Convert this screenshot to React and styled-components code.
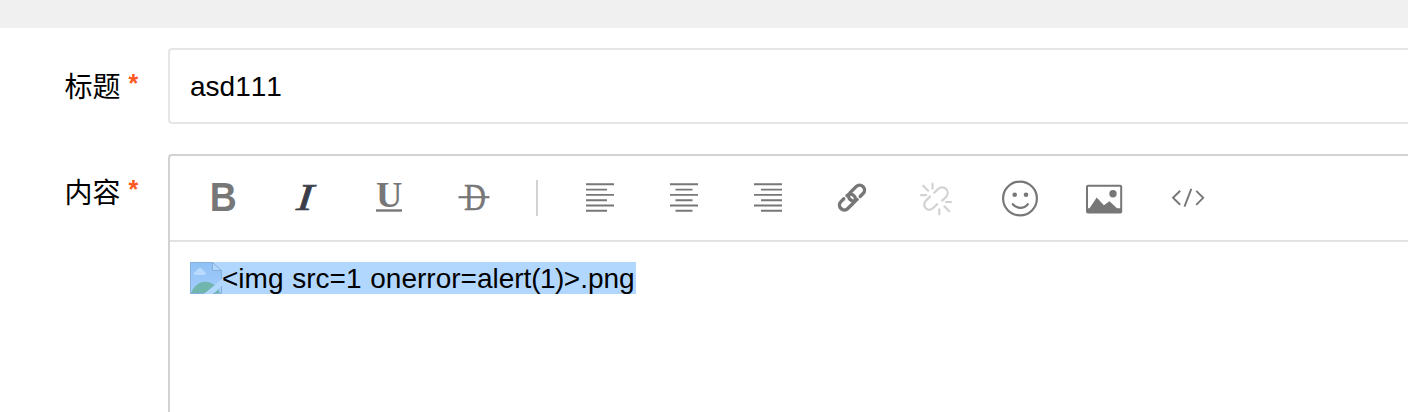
import React from "react";
import styled, { createGlobalStyle } from "styled-components";

const GlobalStyle = createGlobalStyle`
  * { box-sizing: border-box; }
  body {
    margin: 0;
    background: #fff;
    color: #000;
    overflow: hidden;
    font-family: "Liberation Sans", "Noto Sans CJK SC", sans-serif;
    font-size: 28px;
    font-kerning: none;
  }
`;

const Page = styled.main`
  height: 412px;
  display: flex;
  flex-direction: column;
  overflow: hidden;
`;

const TopStrip = styled.div`
  flex: none;
  height: 28px;
  background: #f0f0f0;
`;

const Form = styled.div`
  flex: 1;
  display: flex;
  flex-direction: column;
  gap: 30px;
  padding-top: 20px;
`;

const Row = styled.div`
  flex: ${(p) => (p.$grow ? "1" : "none")};
  display: grid;
  grid-template-columns: 168px 1fr;
`;

const Label = styled.label`
  display: flex;
  gap: 8px;
  height: 76px;
  padding-left: 64.5px;
  line-height: 79px;
`;

const Required = styled.span`
  color: #ff5722;
  font-size: 25px;
  font-weight: 700;
  line-height: 71px;
`;

const Input = styled.input`
  height: 76px;
  width: 100%;
  padding: 2px 20px 0;
  border: 2px solid #e6e6e6;
  border-right: 0;
  border-radius: 4px 0 0 4px;
  outline: none;
  font: inherit;
  color: inherit;
  font-kerning: none;
`;

const Editor = styled.section`
  display: flex;
  flex-direction: column;
  border: 2px solid #d2d2d2;
  border-width: 2px 0 0 2px;
  border-radius: 4px 0 0 0;
`;

const Toolbar = styled.div`
  display: flex;
  height: 86px;
  padding-left: 10px;
  border-bottom: 2px solid #e2e2e2;
`;

const Tool = styled.button`
  width: 84px;
  height: 84px;
  padding: 0;
  border: 0;
  background: none;
  color: ${(p) => p.$color || "#777"};
`;

const Glyph = styled.svg`
  display: block;
  fill: none;
  stroke: currentColor;
  stroke-linecap: ${(p) => p.$cap || "butt"};
  stroke-width: ${(p) => p.$weight || 2};

  text {
    fill: currentColor;
    stroke: none;
  }
`;

const Separator = styled.i`
  width: 2px;
  height: 36px;
  margin: 24px 20px;
  background: #d2d2d2;
`;

const Content = styled.div`
  flex: 1;
  padding: 20px;
`;

const Selection = styled.div`
  display: inline-flex;
  width: 446px;
  height: 32px;
  background: #b2d7ff;
  line-height: 34px;
  white-space: pre;
  word-spacing: 1px;
`;

const Tight = styled.span`
  letter-spacing: -0.6px;
`;

const BrokenImage = styled.svg`
  flex: none;
  display: block;
`;

function Icon({ label, color, cap, weight, children }) {
  return (
    <Tool type="button" aria-label={label} $color={color}>
      <Glyph width="84" height="84" viewBox="-42 -42 84 84" $cap={cap} $weight={weight}>
        {children}
      </Glyph>
    </Tool>
  );
}

const serif = '"Liberation Serif", serif';

export default function App() {
  return (
    <Page>
      <GlobalStyle />
      <TopStrip />
      <Form>
        <Row>
          <Label htmlFor="title">标题<Required>*</Required></Label>
          <Input id="title" defaultValue="asd111" />
        </Row>
        <Row $grow>
          <Label>内容<Required>*</Required></Label>
          <Editor>
            <Toolbar>
              <Icon label="Bold">
                <text x="-12.2" y="13.4" fontSize="40.5" fontWeight="700" fontFamily='"Liberation Sans", sans-serif' textLength="27" lengthAdjust="spacingAndGlyphs">B</text>
              </Icon>
              <Icon label="Italic" color="#393d49">
                <text transform="translate(-10.2 12) skewX(-5) scale(1.3 1)" fontSize="38" fontStyle="italic" fontFamily={serif} style={{ stroke: "currentColor", strokeWidth: 0.7 }}>I</text>
              </Icon>
              <Icon label="Underline">
                <text x="-14" y="9" fontSize="36.5" fontWeight="700" fontFamily={serif}>U</text>
                <path d="M-14 12.5H12" strokeWidth="2.4" />
              </Icon>
              <Icon label="Strikethrough">
                <text x="-10" y="12" fontSize="37.5" fontFamily={serif} textLength="22" lengthAdjust="spacingAndGlyphs" style={{ stroke: "currentColor", strokeWidth: 0.5 }}>D</text>
                <path d="M-15.5 -.8H15.5" strokeWidth="2.2" />
              </Icon>
              <Separator />
              <Icon label="Align left" weight={1.9}>
                <path d="M-14-13.7h28M-14-8.4h21M-14-3.1h28M-14 2.2h21M-14 7.5h28M-14 12.8h21" />
              </Icon>
              <Icon label="Align center" weight={1.9}>
                <path d="M-14-13.7h28M-8.5-8.4h17M-14-3.1h28M-8.5 2.2h17M-14 7.5h28M-8.5 12.8h17" />
              </Icon>
              <Icon label="Align right" weight={1.9}>
                <path d="M-14-13.7h28M-7-8.4h21M-14-3.1h28M-7 2.2h21M-14 7.5h28M-7 12.8h21" />
              </Icon>
              <Icon label="Link" weight={3.4} cap="round">
                <path transform="translate(4.6 -4.9) rotate(-45)" d="M.2 4.9H4.25A4.9 4.9 0 0 0 4.25-4.9H-4.25A4.9 4.9 0 0 0-4.25 4.9" />
                <path transform="translate(-4.6 4.1) rotate(-45)" d="M-.2-4.9H-4.25A4.9 4.9 0 0 0-4.25 4.9H4.25A4.9 4.9 0 0 0 4.25-4.9" />
              </Icon>
              <Icon label="Unlink" color="#d2d2d2" weight={2.2} cap="round">
                <path d="M-1.8-5.3L1.8-8.8C4.7-11.5 8-11.2 10.2-9C12.4-6.7 12.2-3.4 9.7-.8L6.2 2.6M-6-1.4L-9.8 2.4C-12.3 5-12.4 8.3-10.2 10.3C-7.9 12.4-4.8 12 -2.3 9.5L1.1 6.2" />
                <path d="M-3.5-14.3v5M-12.8-12.3l5 5M-14.9-2.8h5M3.3 11.3v5M8.3 8.3l5 5M10 4h5" />
              </Icon>
              <Icon label="Emoticon" weight={2.2} cap="round">
                <circle cx="0" cy=".5" r="16.9" />
                <g fill="currentColor" stroke="none">
                  <circle cx="-5.3" cy="-3.2" r="2.3" />
                  <circle cx="6" cy="-3.2" r="2.3" />
                </g>
                <path d="M-7.2 6.2C-3.3 11 3.9 11 7.8 6.2" />
              </Icon>
              <Icon label="Image">
                <rect x="-17" y="-12.2" width="34.2" height="26.8" rx="1" />
                <circle cx="9" cy="-4.2" r="3.7" fill="currentColor" stroke="none" />
                <path d="M-17 14.5V10.3H-14.5L-7.3-.4L-.1 7.2L5.5 3.2L13 10.3H17V14.5Z" fill="currentColor" stroke="none" />
              </Icon>
              <Icon label="Source code" weight={1.9}>
                <path d="M-7.8-7.2L-15-.2L-7.8 6.8M3.3-9.2L-3.5 8.6M8.2-7.2L15.2-.2L8.2 6.8" />
              </Icon>
            </Toolbar>
            <Content>
              <Selection>
                <BrokenImage width="32" height="32" viewBox="0 0 32 32">
                  <defs>
                    <linearGradient id="sky" x2="0" y2="1">
                      <stop stopColor="#8fc1f6" />
                      <stop offset="1" stopColor="#a4cdfc" />
                    </linearGradient>
                  </defs>
                  <path d="M.5.5H22.5V8.5H31.5V31.5H.5Z" fill="url(#sky)" />
                  <path d="M22.5.5L31.5 8.5H22.5Z" fill="#b2d7ff" />
                  <path d="M6 13C3 13 3 9.8 6.2 9.6C7 5 13 5.2 13.3 9C16.6 9.4 16.6 13 14 13Z" fill="#b9daff" />
                  <path d="M1 31C4 24 9 19.8 15 19.8C22 19.8 27 24 30 31Z" fill="#70b6af" />
                  <path d="M14 32L32 17V24L23 32Z" fill="#b2d7ff" />
                  <path d="M14 31.5H.5V.5H22.5L31.5 8.5V17M31.5 24V31.5H23M22.5.5V8.5H31.5" fill="none" stroke="#86afdb" />
                </BrokenImage>
                <span>{"<img src=1 onerror=alert"}<Tight>{"(1)"}</Tight>{">.png"}</span>
              </Selection>
            </Content>
          </Editor>
        </Row>
      </Form>
    </Page>
  );
}
